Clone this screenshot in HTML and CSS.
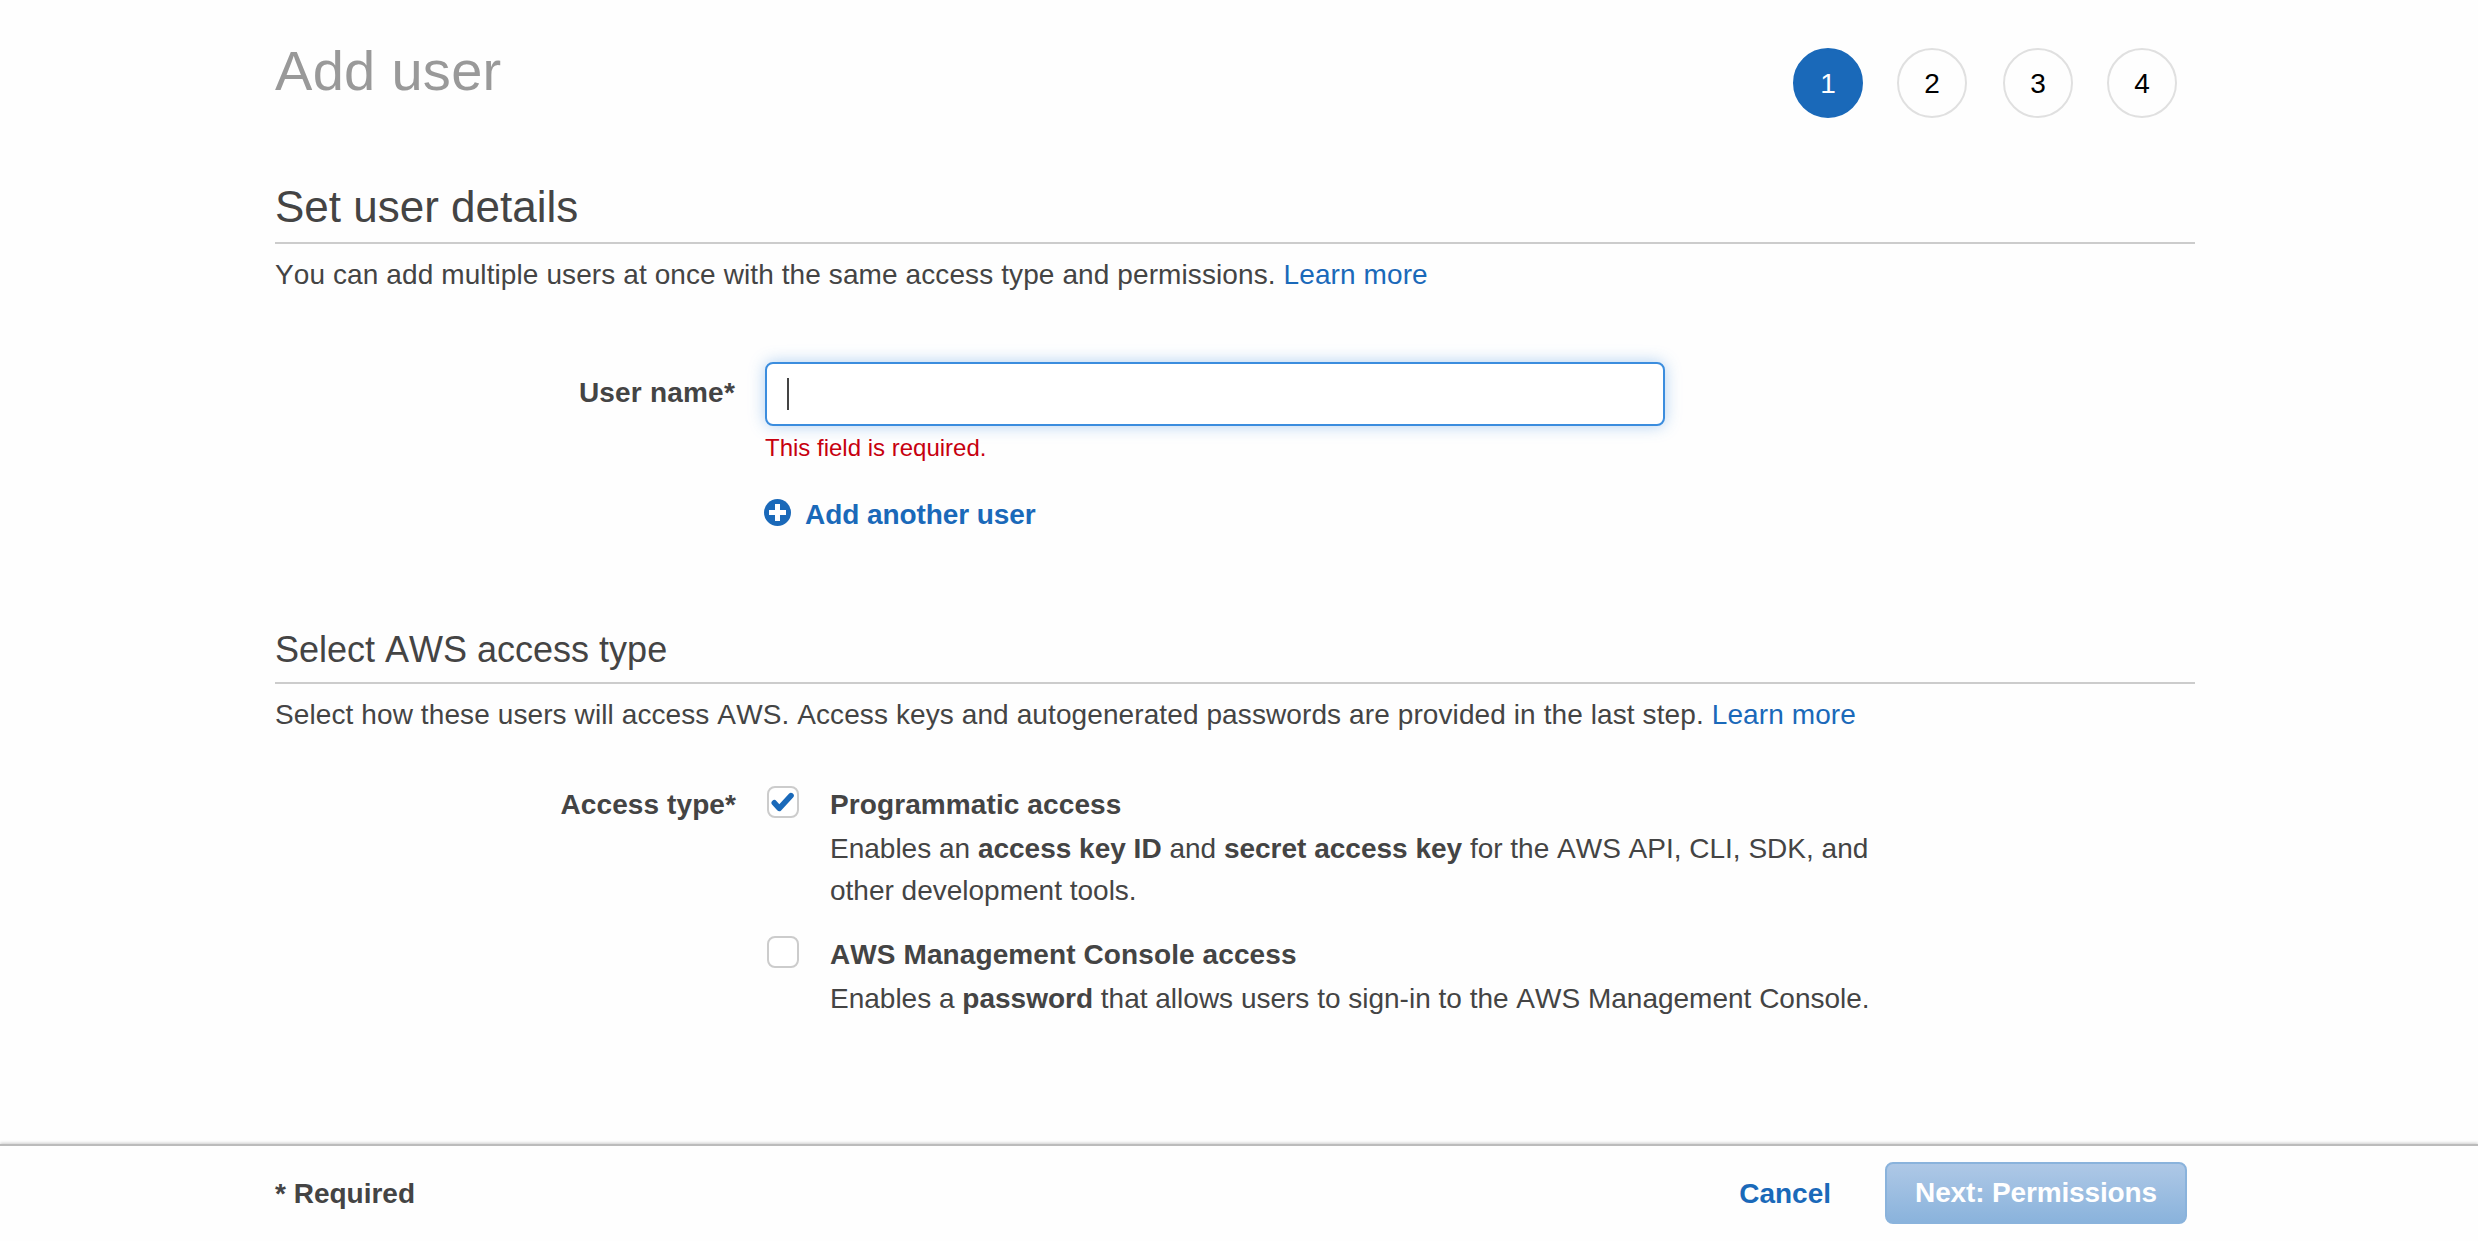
FILE: index.html
```
<!DOCTYPE html>
<html lang="en">
<head>
<meta charset="utf-8">
<title>Add user</title>
<link rel="stylesheet" href="styles.css">
</head>
<body>
<main class="wizard">
  <header class="wizard-header">
    <h1 class="wizard-title">Add user</h1>
    <ol class="steps">
      <li class="step step-active">1</li>
      <li class="step">2</li>
      <li class="step">3</li>
      <li class="step">4</li>
    </ol>
  </header>

  <section class="details">
    <h2 class="section-title">Set user details</h2>
    <p class="intro">You can add multiple users at once with the same access type and permissions. <a class="link" href="#">Learn more</a></p>
    <div class="form-row user-row">
      <label class="form-label user-label">User name*</label>
      <div class="form-field">
        <div class="text-input"><span class="caret"></span></div>
        <p class="error">This field is required.</p>
        <a class="add-user" href="#">
          <svg class="add-icon" viewBox="0 0 27 27"><circle cx="13.5" cy="13.5" r="13.5"/><path d="M13.5 5v17M5 13.5h17"/></svg>
          <span>Add another user</span>
        </a>
      </div>
    </div>
  </section>

  <section class="access">
    <h3 class="section-title section-title-small">Select AWS access type</h3>
    <p class="intro">Select how these users will access AWS. Access keys and autogenerated passwords are provided in the last step. <a class="link" href="#">Learn more</a></p>
    <div class="form-row access-row">
      <span class="form-label">Access type*</span>
      <div class="options">
        <div class="option">
          <span class="checkbox"><svg class="check" viewBox="0 0 28 28"><path d="M5.3 14.8l5 5.6L22 7.6"/></svg></span>
          <div class="option-text">
            <strong class="option-title">Programmatic access</strong>
            <p class="option-desc">Enables an <b>access key ID</b> and <b>secret access key</b> for the AWS API, CLI, SDK, and other development tools.</p>
          </div>
        </div>
        <div class="option">
          <span class="checkbox"></span>
          <div class="option-text">
            <strong class="option-title">AWS Management Console access</strong>
            <p class="option-desc">Enables a <b>password</b> that allows users to sign-in to the AWS Management Console.</p>
          </div>
        </div>
      </div>
    </div>
  </section>
</main>

<footer class="footer">
  <span class="required">* Required</span>
  <div class="actions">
    <a class="cancel" href="#">Cancel</a>
    <button class="next" type="button">Next: Permissions</button>
  </div>
</footer>
</body>
</html>
```
FILE: styles.css
```
* {
  box-sizing: border-box;
}

body {
  margin: 0;
  min-height: 100vh;
  display: flex;
  flex-direction: column;
  background: #fefefe;
  color: #444;
  font: 28px/40px "Helvetica Neue", "Liberation Sans", Arial, sans-serif;
  font-kerning: none;
}

h1, h2, h3, p, ol {
  margin: 0;
  padding: 0;
  font-weight: normal;
}

a {
  color: #1a69b9;
  text-decoration: none;
}

.wizard {
  flex: 1;
  width: 1920px;
  margin-left: 275px;
  padding-top: 48px;
}

.wizard-header {
  display: flex;
  justify-content: space-between;
  height: 70px;
  padding-right: 18px;
}

.wizard-title {
  margin-top: -5px;
  color: #999;
  font-size: 56px;
  line-height: 56px;
  letter-spacing: 0.3px;
}

.steps {
  display: flex;
  gap: 34px;
  list-style: none;
}

.step {
  width: 70px;
  height: 70px;
  border: 2px solid #e0e0e0;
  border-radius: 50%;
  color: #000;
  line-height: 67px;
  text-align: center;
}

.step:nth-child(3) {
  margin-left: 2px;
}

.step-active {
  border-color: #1a69b9;
  background: #1a69b9;
  color: #fff;
}

.details {
  margin-top: 67px;
}

.section-title {
  padding-bottom: 13px;
  border-bottom: 2px solid #ccc;
  font-size: 44px;
  line-height: 44px;
}

.section-title-small {
  padding-bottom: 14px;
  font-size: 36px;
  line-height: 36px;
}

.intro {
  margin-top: 11px;
  letter-spacing: 0.1px;
}

.form-row {
  display: grid;
  grid-template-columns: 461px auto;
  column-gap: 29px;
}

.user-row {
  margin-top: 67px;
}

.form-label {
  font-weight: bold;
  letter-spacing: 0.1px;
  text-align: right;
}

.user-label {
  padding-top: 11px;
  padding-right: 1px;
  letter-spacing: 0.2px;
}

.text-input {
  display: flex;
  align-items: center;
  width: 900px;
  height: 64px;
  padding-left: 20px;
  border: 2px solid #3b8dde;
  border-radius: 8px;
  background: #fff;
  box-shadow: 0 0 16px rgba(59, 141, 222, 0.4);
}

.caret {
  width: 2px;
  height: 32px;
  background: #444;
}

.error {
  margin-top: 7px;
  color: #c7000f;
  font-size: 24px;
  line-height: 30px;
}

.add-user {
  display: flex;
  width: max-content;
  gap: 14px;
  margin: 32px 0 0 -1px;
  font-weight: bold;
  letter-spacing: -0.08px;
}

.add-icon {
  width: 27px;
  height: 27px;
  margin-top: 4px;
  fill: #1a69b9;
  stroke: #fff;
  stroke-width: 5px;
}

.add-icon circle {
  stroke: none;
}

.access {
  margin-top: 97px;
}

.access-row {
  margin-top: 50px;
}

.options {
  display: grid;
  gap: 23px;
  padding-left: 2px;
}

.option {
  display: flex;
  gap: 31px;
}

.checkbox {
  flex: none;
  width: 32px;
  height: 32px;
  margin-top: 1px;
  border: 2px solid #ccc;
  border-radius: 8px;
  background: #fff;
}

.check {
  display: block;
  width: 28px;
  height: 28px;
  fill: none;
  stroke: #1a69b9;
  stroke-width: 5.6px;
  stroke-linecap: round;
  stroke-linejoin: round;
}

.option-text {
  width: 1060px;
}

.option-title {
  display: block;
  letter-spacing: 0.1px;
}

.option-desc {
  margin-top: 3px;
  line-height: 42px;
}

.footer {
  display: flex;
  justify-content: space-between;
  height: 97px;
  padding: 16px 291px 0 275px;
  border-top: 2px solid #bbb;
  box-shadow: 0 -1px 3px rgba(0, 0, 0, 0.2);
  font-weight: bold;
}

.required,
.cancel {
  padding-top: 12px;
}

.actions {
  display: flex;
  gap: 54px;
}

.next {
  width: 302px;
  height: 62px;
  padding: 0;
  border: 2px solid #8ab3dc;
  border-radius: 8px;
  background: linear-gradient(#aec8e6, #8ab3dc);
  color: #fff;
  font: inherit;
  letter-spacing: -0.15px;
}
```
